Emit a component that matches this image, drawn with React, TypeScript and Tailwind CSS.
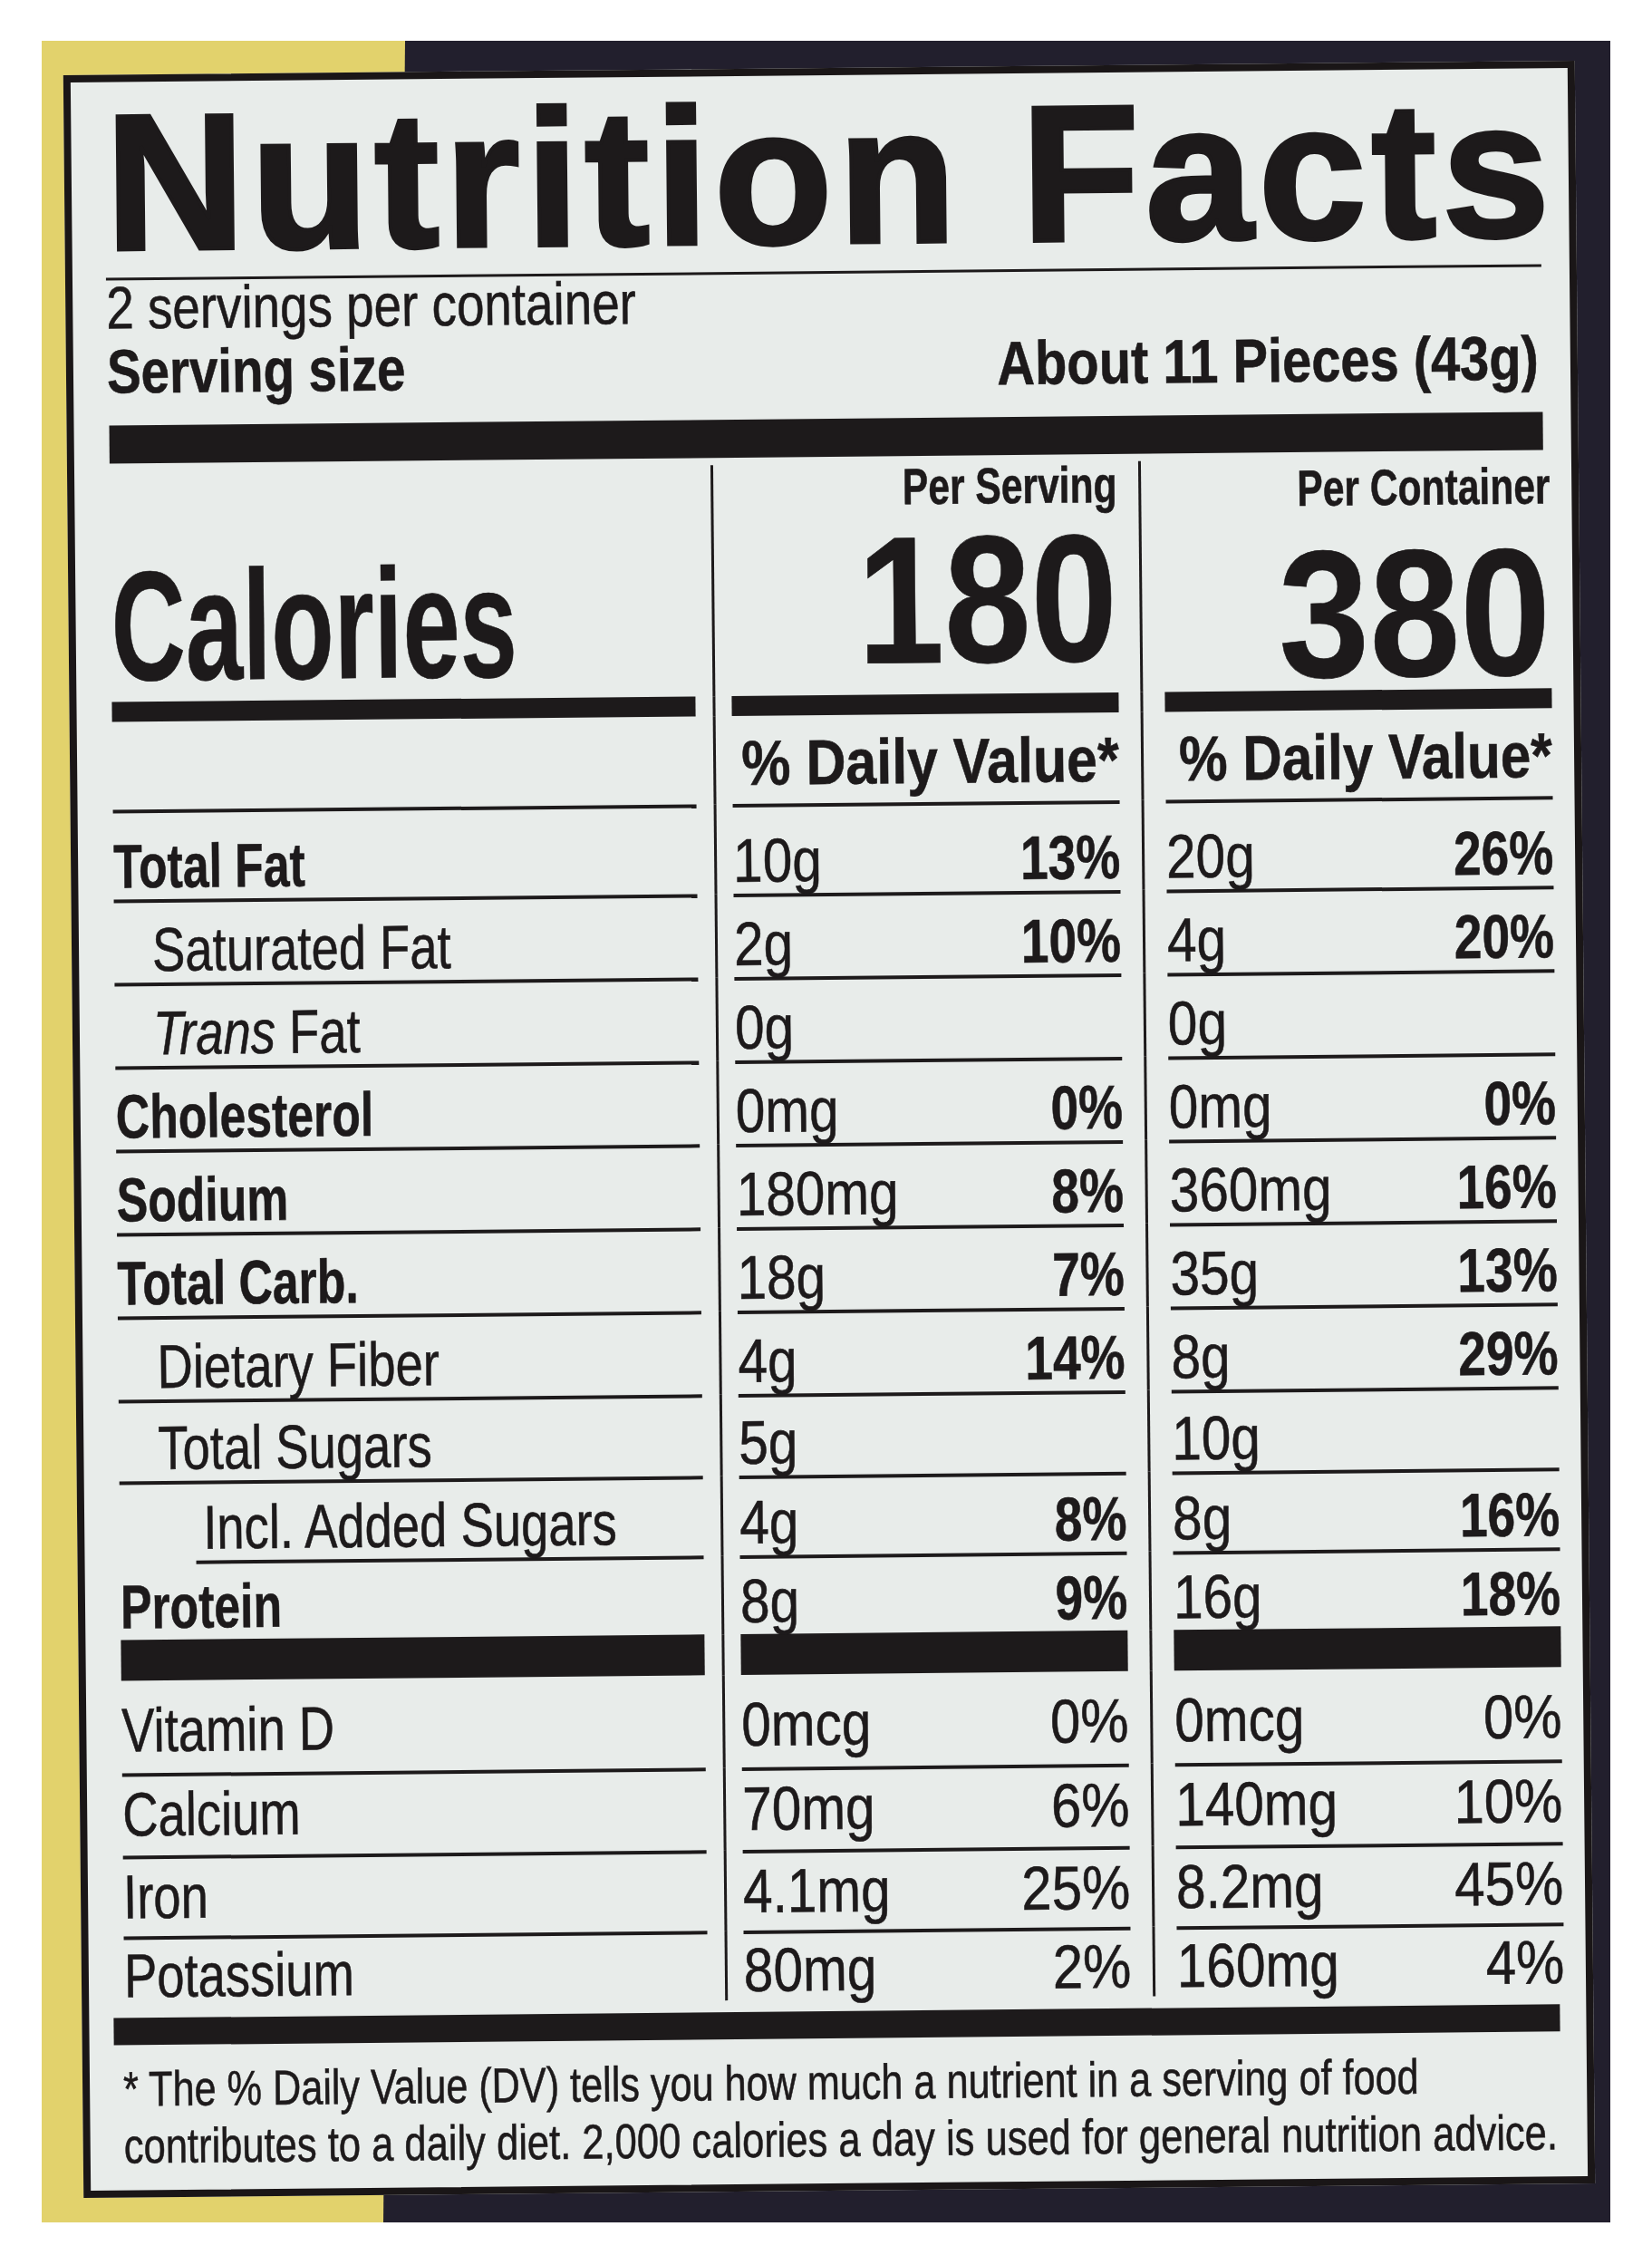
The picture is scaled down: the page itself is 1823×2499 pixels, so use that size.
import React from "react";

const SANS = "[font-family:'Liberation_Sans',Arial,sans-serif]";
const RULE = "h-[4px] bg-[#1d1a1b]";

function S({ c, children }: { c: string; children: React.ReactNode }) {
  return <span className={`inline-block whitespace-nowrap ${c}`}>{children}</span>;
}

function Gap({ w, top = false }: { w: string; top?: boolean }) {
  return (
    <div className={`${w} flex justify-center ${top ? "pt-[8px]" : ""}`}>
      <div className="w-[3px] bg-[#1d1a1b]" />
    </div>
  );
}

type NRow = {
  label: React.ReactNode;
  bold?: boolean;
  indent?: string;
  ruleIndent?: string;
  a1: string;
  p1?: string;
  a2: string;
  p2?: string;
  h: string;
  pb: string;
  rule?: boolean;
  pctBold?: boolean;
};

function ValueCell({
  a,
  p,
  rule,
  pb,
  pctBold,
}: {
  a: string;
  p?: string;
  rule: boolean;
  pb: string;
  pctBold: boolean;
}) {
  return (
    <div className="w-[427px] flex flex-col">
      {rule && <div className={RULE} />}
      <div className={`flex-1 flex items-end justify-between ${pb}`}>
        <S c="origin-left scale-x-[0.86]">{a}</S>
        {p && (
          <S c={pctBold ? "origin-right scale-x-[0.81] font-bold" : "origin-right scale-x-[0.88]"}>
            {p}
          </S>
        )}
      </div>
    </div>
  );
}

function NutrientRow(r: NRow) {
  const rule = r.rule !== false;
  return (
    <div className={`flex ${r.h}`}>
      <div className="w-[644px] flex flex-col">
        {rule && <div className={`${RULE} ${r.ruleIndent ?? ""}`} />}
        <div className={`flex-1 flex items-end ${r.pb} ${r.indent ?? ""}`}>
          <S c={r.bold ? "origin-left scale-x-[0.76] font-bold" : "origin-left scale-x-[0.8]"}>
            {r.label}
          </S>
        </div>
      </div>
      <Gap w="w-[40px]" />
      <ValueCell a={r.a1} p={r.p1} rule={rule} pb={r.pb} pctBold={!!r.pctBold} />
      <Gap w="w-[51px]" />
      <ValueCell a={r.a2} p={r.p2} rule={rule} pb={r.pb} pctBold={!!r.pctBold} />
    </div>
  );
}

const nutrients: NRow[] = [
  { label: "Total Fat", bold: true, a1: "10g", p1: "13%", a2: "20g", p2: "26%", h: "h-[99px]", pb: "pb-[3px]", pctBold: true },
  { label: "Saturated Fat", indent: "pl-[42px]", a1: "2g", p1: "10%", a2: "4g", p2: "20%", h: "h-[92px]", pb: "pb-[3px]", pctBold: true },
  {
    label: (
      <>
        <i>Trans</i> Fat
      </>
    ),
    indent: "pl-[42px]",
    a1: "0g",
    a2: "0g",
    h: "h-[92px]",
    pb: "pb-[3px]",
    pctBold: true,
  },
  { label: "Cholesterol", bold: true, a1: "0mg", p1: "0%", a2: "0mg", p2: "0%", h: "h-[92px]", pb: "pb-[3px]", pctBold: true },
  { label: "Sodium", bold: true, a1: "180mg", p1: "8%", a2: "360mg", p2: "16%", h: "h-[92px]", pb: "pb-[3px]", pctBold: true },
  { label: "Total Carb.", bold: true, a1: "18g", p1: "7%", a2: "35g", p2: "13%", h: "h-[92px]", pb: "pb-[3px]", pctBold: true },
  { label: "Dietary Fiber", indent: "pl-[43px]", a1: "4g", p1: "14%", a2: "8g", p2: "29%", h: "h-[92px]", pb: "pb-[3px]", pctBold: true },
  { label: "Total Sugars", indent: "pl-[43px]", a1: "5g", a2: "10g", h: "h-[90px]", pb: "pb-[3px]", pctBold: true },
  { label: "Incl. Added Sugars", indent: "pl-[92px]", a1: "4g", p1: "8%", a2: "8g", p2: "16%", h: "h-[88px]", pb: "pb-[3px]", pctBold: true },
  { label: "Protein", bold: true, ruleIndent: "ml-[84px]", a1: "8g", p1: "9%", a2: "16g", p2: "18%", h: "h-[87px]", pb: "pb-[3px]", pctBold: true },
];

const vitamins: NRow[] = [
  { label: "Vitamin D", rule: false, a1: "0mcg", p1: "0%", a2: "0mcg", p2: "0%", h: "h-[102px]", pb: "pb-[14px]" },
  { label: "Calcium", a1: "70mg", p1: "6%", a2: "140mg", p2: "10%", h: "h-[91px]", pb: "pb-[12px]" },
  { label: "Iron", a1: "4.1mg", p1: "25%", a2: "8.2mg", p2: "45%", h: "h-[89px]", pb: "pb-[10px]" },
  { label: "Potassium", a1: "80mg", p1: "2%", a2: "160mg", p2: "4%", h: "h-[77px]", pb: "pb-[0px]" },
];

export default function App() {
  return (
    <div className={`${SANS} w-[1823px] h-[2499px] bg-white pt-[45px] pl-[46px] overflow-hidden`}>
      <div className="relative w-[1731px] h-[2407px] bg-[#221f2d] pt-[30px] pl-[35px]">
        <div className="absolute inset-y-0 left-0 w-[401px] bg-[#e2d26c] [clip-path:polygon(0_0,401px_0,377px_100%,0_100%)]" />
        <div className="relative w-[1668px] border-[8px] border-[#1a1617] bg-[#e8ecea] -rotate-[0.55deg] text-[#1d1a1b] [-webkit-text-stroke:0.6px_#1d1a1b]">
          {/* Header */}
          <div className="pl-[37px] pr-[31px] pt-[11px]">
            <div className="border-b-[3px] border-[#1d1a1b] pb-[6px]">
              <div className="font-bold text-[214px] leading-[199px] tracking-[6px] whitespace-nowrap [-webkit-text-stroke:4px_#1d1a1b]">
                Nutrition Facts
              </div>
            </div>
            <div className="text-[66px] leading-[56px] mt-[2px]">
              <S c="origin-left scale-x-[0.83]">2 servings per container</S>
            </div>
            <div className="font-bold text-[68px] leading-[68px] mt-[8px] flex justify-between">
              <S c="origin-left scale-x-[0.83]">Serving size</S>
              <S c="origin-right scale-x-[0.85] mr-[4px]">About 11 Pieces (43g)</S>
            </div>
            <div className="mt-[26px] ml-[2px] h-[42px] bg-[#1d1a1b]" />
          </div>

          {/* Table */}
          <div className="pl-[39px] pr-[24px] text-[68px] leading-[68px]">
            <div className="flex h-[263px]">
              <div className="w-[644px] flex items-end pb-[14px]">
                <S c="origin-left scale-x-[0.66] font-bold text-[172px] leading-[140px]">Calories</S>
              </div>
              <Gap w="w-[40px]" top />
              <div className="w-[427px] flex flex-col items-end pt-[6px]">
                <S c="origin-right scale-x-[0.76] font-bold text-[56px] leading-[56px]">Per Serving</S>
                <S c="origin-right scale-x-[0.86] font-bold text-[200px] leading-[160px] mt-[17px]">180</S>
              </div>
              <Gap w="w-[51px]" top />
              <div className="w-[427px] flex flex-col items-end pt-[12px]">
                <S c="origin-right scale-x-[0.76] font-bold text-[56px] leading-[56px]">Per Container</S>
                <S c="origin-right scale-x-[0.9] font-bold text-[200px] leading-[160px] mt-[31px]">380</S>
              </div>
            </div>

            <div className="flex h-[22px]">
              <div className="w-[644px] bg-[#1d1a1b]" />
              <Gap w="w-[40px]" />
              <div className="w-[427px] bg-[#1d1a1b]" />
              <Gap w="w-[51px]" />
              <div className="w-[427px] bg-[#1d1a1b]" />
            </div>

            <div className="flex h-[97px]">
              <div className="w-[644px]" />
              <Gap w="w-[40px]" />
              <div className="w-[427px] flex justify-end pt-[17px]">
                <S c="origin-right scale-x-[0.87] font-bold text-[70px] leading-[70px]">% Daily Value*</S>
              </div>
              <Gap w="w-[51px]" />
              <div className="w-[427px] flex justify-end pt-[17px]">
                <S c="origin-right scale-x-[0.86] font-bold text-[70px] leading-[70px]">% Daily Value*</S>
              </div>
            </div>

            {nutrients.map((r, i) => (
              <NutrientRow key={i} {...r} />
            ))}

            <div className="flex h-[45px]">
              <div className="w-[644px] bg-[#1d1a1b]" />
              <Gap w="w-[40px]" />
              <div className="w-[427px] bg-[#1d1a1b]" />
              <Gap w="w-[51px]" />
              <div className="w-[427px] bg-[#1d1a1b]" />
            </div>

            {vitamins.map((r, i) => (
              <NutrientRow key={i} {...r} />
            ))}
          </div>

          <div className="mt-[13px] ml-[27px] mr-[29px] h-[30px] bg-[#1d1a1b]" />
          <div className="pl-[37px] pt-[17px] pb-[17px] text-[54px] leading-[63px]">
            <S c="origin-left scale-x-[0.8]">
              * The % Daily Value (DV) tells you how much a nutrient in a serving of food
            </S>
            <br />
            <S c="origin-left scale-x-[0.806]">
              contributes to a daily diet. 2,000 calories a day is used for general nutrition advice.
            </S>
          </div>
        </div>
      </div>
    </div>
  );
}
